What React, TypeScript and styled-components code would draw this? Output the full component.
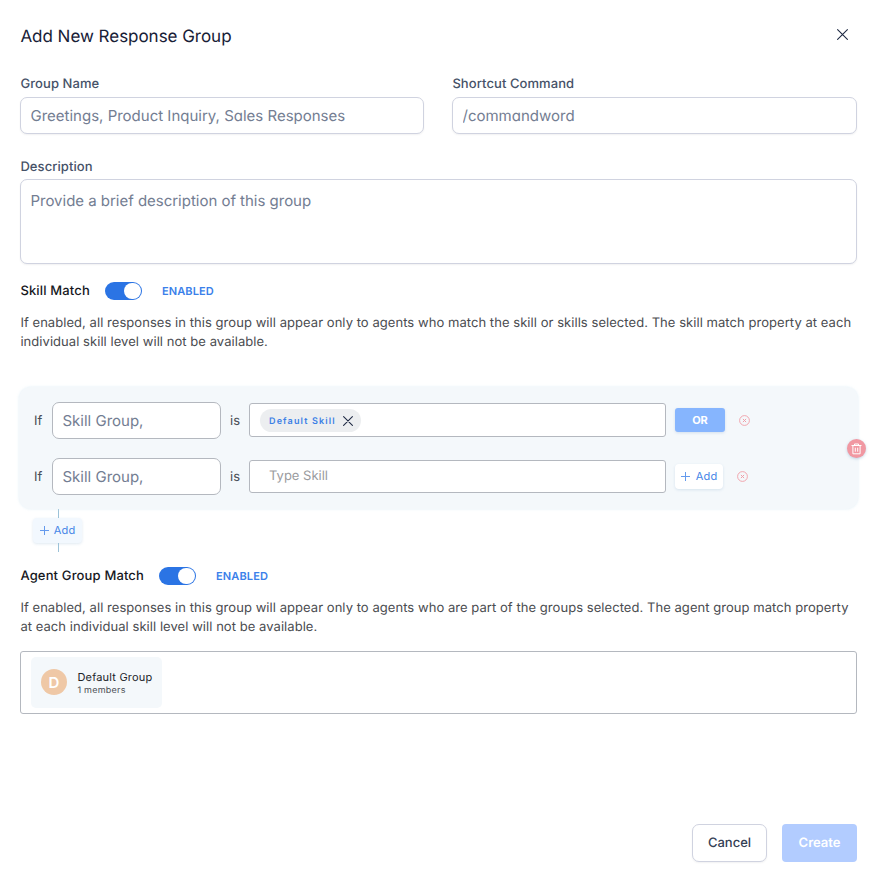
import React from 'react';
import styled, { createGlobalStyle } from 'styled-components';

const GlobalStyle = createGlobalStyle`
  *, *::before, *::after { box-sizing: border-box; }
  body { margin: 0; background: #fff; font-family: Inter, sans-serif; text-rendering: geometricPrecision; }
  input, textarea, button { font-family: inherit; margin: 0; text-rendering: inherit; }
  button { cursor: pointer; padding: 0; }
  h1, p { margin: 0; }
`;

const Dialog = styled.main`
  width: 878px;
  height: 878px;
  padding: 24px 21px 16px 20px;
  display: flex;
  flex-direction: column;
  background: #fff;
`;

const Header = styled.header`
  display: flex;
  justify-content: space-between;
  height: 24px;
`;

const Title = styled.h1`
  padding: 1px 0 0 0.4px;
  font-size: 17px;
  font-weight: 400;
  line-height: 24px;
  letter-spacing: -0.03px;
  color: #172036;
`;

const IconButton = styled.button`
  border: 0;
  background: none;
  display: flex;
  align-items: center;
  justify-content: center;
`;

const CloseButton = styled(IconButton)`
  width: 21px;
  height: 21px;
  margin-right: 4px;
  color: #1f2a44;
`;

const FieldRow = styled.div`
  display: grid;
  grid-template-columns: 404px 405px;
  gap: 28px;
  margin-top: 27px;
`;

const Field = styled.label`
  display: flex;
  flex-direction: column;
`;

const FieldLabel = styled.span<{ $height?: number }>`
  height: ${p => p.$height ?? 22}px;
  padding: 1px 0 0 0.4px;
  font-size: 13px;
  line-height: 17px;
  letter-spacing: 0.08px;
  font-weight: 500;
  color: #465268;
`;

const TextInput = styled.input<{ $strong?: boolean }>`
  width: 100%;
  height: 37px;
  padding: 0 9.5px;
  border: 1px solid ${p => (p.$strong ? '#b4b8bf' : '#d0d3e0')};
  border-radius: 7px;
  background: #fff;
  box-shadow: ${p => (p.$strong ? 'none' : '0 1px 2px rgba(16, 24, 40, 0.06)')};
  font-size: 15px;
  font-feature-settings: ${p => (p.$strong ? 'normal' : "'cv11'")};
  outline: none;
  &::placeholder { color: #737d92; opacity: 1; }
`;

const DescriptionField = styled(Field)`
  margin-top: 24px;
`;

const TextArea = styled.textarea`
  height: 85px;
  padding: 10px 9.5px;
  border: 1px solid #d0d3e0;
  border-radius: 7px;
  box-shadow: 0 1px 2px rgba(16, 24, 40, 0.06);
  resize: none;
  font-size: 15px;
  line-height: 22px;
  letter-spacing: -0.02px;
  outline: none;
  &::placeholder { color: #737d92; opacity: 1; }
`;

const MatchHeader = styled.div<{ $top: number }>`
  display: flex;
  align-items: center;
  height: 20px;
  margin-top: ${p => p.$top}px;
`;

const MatchTitle = styled.span`
  padding: 2px 0 0 0.4px;
  font-size: 13px;
  line-height: 20px;
  font-weight: 500;
  letter-spacing: 0.15px;
  color: #16181d;
`;

const Toggle = styled.button`
  width: 37px;
  height: 18px;
  margin: 1px 0 0 15px;
  padding: 1px;
  border: 0;
  border-radius: 9px;
  background: #2b74e4;
  display: flex;
  justify-content: flex-end;
`;

const Knob = styled.span`
  width: 17px;
  height: 16px;
  border-radius: 8px;
  background: #fff;
`;

const Status = styled.span`
  margin: 2px 0 0 20px;
  font-size: 11px;
  line-height: 18px;
  font-weight: 600;
  letter-spacing: 0.13px;
  color: #3a80ea;
`;

const HelpText = styled.p`
  height: 38px;
  margin-top: 14px;
  padding-left: 0.4px;
  font-size: 13px;
  line-height: 19px;
  letter-spacing: 0.052px;
  color: #4a4c50;
`;

const RulePanel = styled.section`
  position: relative;
  flex: none;
  height: 122px;
  margin: 35px -1px 0 -1px;
  padding: 15px 0 0 15px;
  display: flex;
  flex-direction: column;
  gap: 19px;
  border-radius: 12px;
  background: #f4f8fb;
  box-shadow: 0 0 3px rgba(205, 228, 242, 0.6);
`;

const RuleRow = styled.div`
  display: flex;
  align-items: center;
  height: 37px;
`;

const RuleWord = styled.span<{ $width: number }>`
  width: ${p => p.$width}px;
  padding-top: 1px;
  font-size: 13px;
  color: #4a4e56;
`;

const GroupBox = styled.div`
  width: 169px;
  margin-right: 9px;
`;

const SkillBox = styled.div<{ $filled: boolean }>`
  width: 417px;
  height: ${p => (p.$filled ? 34 : 33)}px;
  margin: 0 9px ${p => (p.$filled ? 1 : 0)}px 0;
  padding-left: 10px;
  display: flex;
  align-items: center;
  border: 1px solid #b4b8bf;
  border-radius: 3px;
  background: #fff;
`;

const SkillTag = styled.span`
  height: 23px;
  margin-top: 1px;
  padding: 0 7px 0 9px;
  display: flex;
  align-items: center;
  gap: 6px;
  border-radius: 12px;
  background: #eceef0;
  color: #3b80e6;
  font-size: 9px;
  font-weight: 600;
  letter-spacing: 1.15px;
`;

const TagLabel = styled.span`
  padding-top: 1px;
`;

const TagClose = styled(IconButton)`
  width: 12px;
  height: 12px;
  color: #1f2a44;
`;

const SkillHint = styled.span`
  margin-left: 9px;
  font-size: 13px;
  line-height: 16px;
  padding-bottom: 2px;
  color: #9a9b9e;
`;

const OrButton = styled.button`
  width: 50px;
  height: 24px;
  margin-bottom: 1px;
  border: 0;
  border-radius: 3px;
  background: #86b5fe;
  box-shadow: 0 1px 3px rgba(80, 130, 190, 0.2);
  color: #fff;
  font-size: 11px;
  font-weight: 700;
`;

const AddButton = styled.button<{ $tinted?: boolean }>`
  width: ${p => (p.$tinted ? 49 : 48)}px;
  height: 25px;
  padding-bottom: 1px;
  display: flex;
  align-items: center;
  justify-content: center;
  gap: ${p => (p.$tinted ? 5 : 6)}px;
  border: 0;
  border-radius: 4px;
  background: ${p => (p.$tinted ? '#f2f8fe' : '#fff')};
  box-shadow: 0 1px 3px rgba(100, 150, 190, 0.2);
  color: #4384e7;
  font-size: 11px;
  letter-spacing: 0.2px;
  svg { color: #649aed; }
`;

const RemoveButton = styled(IconButton)`
  width: 11px;
  height: 11px;
  margin-left: 14px;
  color: #f09da6;
`;

const DeletePanel = styled(IconButton)`
  position: absolute;
  right: -8px;
  top: 52px;
  width: 19px;
  height: 19px;
  border-radius: 50%;
  background: #f198a2;
  box-shadow: 0 1px 3px rgba(90, 140, 180, 0.35);
  color: #fff;
`;

const Branch = styled.div`
  width: 49px;
  height: 43px;
  margin: 0 0 0 13px;
  display: flex;
  flex-direction: column;
  align-items: center;
`;

const Connector = styled.span<{ $height: number }>`
  width: 1px;
  height: ${p => p.$height}px;
  margin-left: 2px;
  background: #9cc2d8;
`;

const GroupSelect = styled.div`
  height: 63px;
  margin-top: 14px;
  padding: 5px 10px;
  border: 1px solid #b4b8bf;
  border-radius: 3px;
`;

const GroupChip = styled.div`
  width: 131px;
  height: 51px;
  padding: 0 0 1px 10px;
  display: flex;
  align-items: center;
  gap: 10px;
  border-radius: 5px;
  background: #f4f8fb;
`;

const Avatar = styled.span`
  width: 26px;
  height: 26px;
  border-radius: 50%;
  display: flex;
  align-items: center;
  justify-content: center;
  background: #efc8a6;
  color: #fff;
  font-size: 15px;
  font-weight: 600;
`;

const GroupInfo = styled.div`
  height: 28px;
  display: flex;
  flex-direction: column;
  padding: 2px 0 0 0.4px;
`;

const GroupName = styled.span`
  font-size: 11px;
  line-height: 14px;
  letter-spacing: 0.2px;
  color: #202329;
`;

const GroupCount = styled.span`
  font-size: 9px;
  line-height: 13px;
  letter-spacing: 0.24px;
  color: #4b4e54;
`;

const Footer = styled.footer`
  margin-top: auto;
  display: flex;
  justify-content: flex-end;
  gap: 15px;
`;

const FooterButton = styled.button<{ $primary?: boolean }>`
  width: 75px;
  height: 38px;
  padding-bottom: 1px;
  border: ${p => (p.$primary ? '0' : '1px solid #d0d3e0')};
  border-radius: ${p => (p.$primary ? 4 : 7)}px;
  background: ${p => (p.$primary ? '#b2ccff' : '#fff')};
  box-shadow: ${p => (p.$primary ? 'none' : '0 1px 2px rgba(16, 24, 40, 0.06)')};
  color: ${p => (p.$primary ? '#fff' : '#344054')};
  font-size: 13px;
  font-weight: ${p => (p.$primary ? 600 : 500)};
`;

const Cross = ({ size }: { size: number }) => (
  <svg width={size} height={size} viewBox={`0 0 ${size} ${size}`} fill="none" stroke="currentColor" strokeWidth="1.1" strokeLinecap="round">
    <path d={`M.6.6 ${size - 0.6} ${size - 0.6}M${size - 0.6}.6.6 ${size - 0.6}`} />
  </svg>
);

const Plus = () => (
  <svg width="9" height="9" viewBox="0 0 9 9" fill="none" stroke="currentColor">
    <path d="M4.5 0v9M0 4.5h9" />
  </svg>
);

const CircleCross = () => (
  <svg width="11" height="11" viewBox="0 0 11 11" fill="none" stroke="currentColor">
    <circle cx="5.5" cy="5.5" r="4.9" strokeWidth=".9" />
    <path d="m3.9 3.9 3.2 3.2M7.1 3.9 3.9 7.1" />
  </svg>
);

const Trash = () => (
  <svg width="11" height="12" viewBox="0 0 11 12" fill="none" stroke="currentColor" strokeWidth="1">
    <path d="M.5 2.5h10M3.5 2.3V1h4v1.3M1.9 2.7v8.1h7.2V2.7M4.3 4.7v4M6.7 4.7v4" />
  </svg>
);

const MatchSetting = ({ title, help, top }: { title: string; help: string; top: number }) => (
  <>
    <MatchHeader $top={top}>
      <MatchTitle>{title}</MatchTitle>
      <Toggle role="switch" aria-checked="true" aria-label={title}><Knob /></Toggle>
      <Status>ENABLED</Status>
    </MatchHeader>
    <HelpText>{help}</HelpText>
  </>
);

const Rule = ({ skill }: { skill?: string }) => (
  <RuleRow>
    <RuleWord $width={18}>If</RuleWord>
    <GroupBox><TextInput $strong placeholder="Skill Group," /></GroupBox>
    <RuleWord $width={19}>is</RuleWord>
    <SkillBox $filled={Boolean(skill)}>
      {skill ? (
        <SkillTag><TagLabel>{skill}</TagLabel><TagClose aria-label="Remove skill"><Cross size={10} /></TagClose></SkillTag>
      ) : (
        <SkillHint>Type Skill</SkillHint>
      )}
    </SkillBox>
    {skill ? <OrButton>OR</OrButton> : <AddButton><Plus />Add</AddButton>}
    <RemoveButton aria-label="Remove rule"><CircleCross /></RemoveButton>
  </RuleRow>
);

export default function App() {
  return (
    <Dialog>
      <GlobalStyle />
      <Header>
        <Title>Add New Response Group</Title>
        <CloseButton aria-label="Close"><Cross size={11} /></CloseButton>
      </Header>
      <FieldRow>
        <Field>
          <FieldLabel>Group Name</FieldLabel>
          <TextInput placeholder="Greetings, Product Inquiry, Sales Responses" />
        </Field>
        <Field>
          <FieldLabel>Shortcut Command</FieldLabel>
          <TextInput placeholder="/commandword" />
        </Field>
      </FieldRow>
      <DescriptionField>
        <FieldLabel $height={21}>Description</FieldLabel>
        <TextArea placeholder="Provide a brief description of this group" />
      </DescriptionField>
      <MatchSetting
        top={16}
        title="Skill Match"
        help="If enabled, all responses in this group will appear only to agents who match the skill or skills selected. The skill match property at each individual skill level will not be available."
      />
      <RulePanel>
        <Rule skill="Default Skill" />
        <Rule />
        <DeletePanel aria-label="Delete rules"><Trash /></DeletePanel>
      </RulePanel>
      <Branch>
        <Connector $height={9} />
        <AddButton $tinted><Plus />Add</AddButton>
        <Connector $height={9} />
      </Branch>
      <MatchSetting
        top={13}
        title="Agent Group Match"
        help="If enabled, all responses in this group will appear only to agents who are part of the groups selected. The agent group match property at each individual skill level will not be available."
      />
      <GroupSelect>
        <GroupChip>
          <Avatar>D</Avatar>
          <GroupInfo>
            <GroupName>Default Group</GroupName>
            <GroupCount>1 members</GroupCount>
          </GroupInfo>
        </GroupChip>
      </GroupSelect>
      <Footer>
        <FooterButton>Cancel</FooterButton>
        <FooterButton $primary>Create</FooterButton>
      </Footer>
    </Dialog>
  );
}
